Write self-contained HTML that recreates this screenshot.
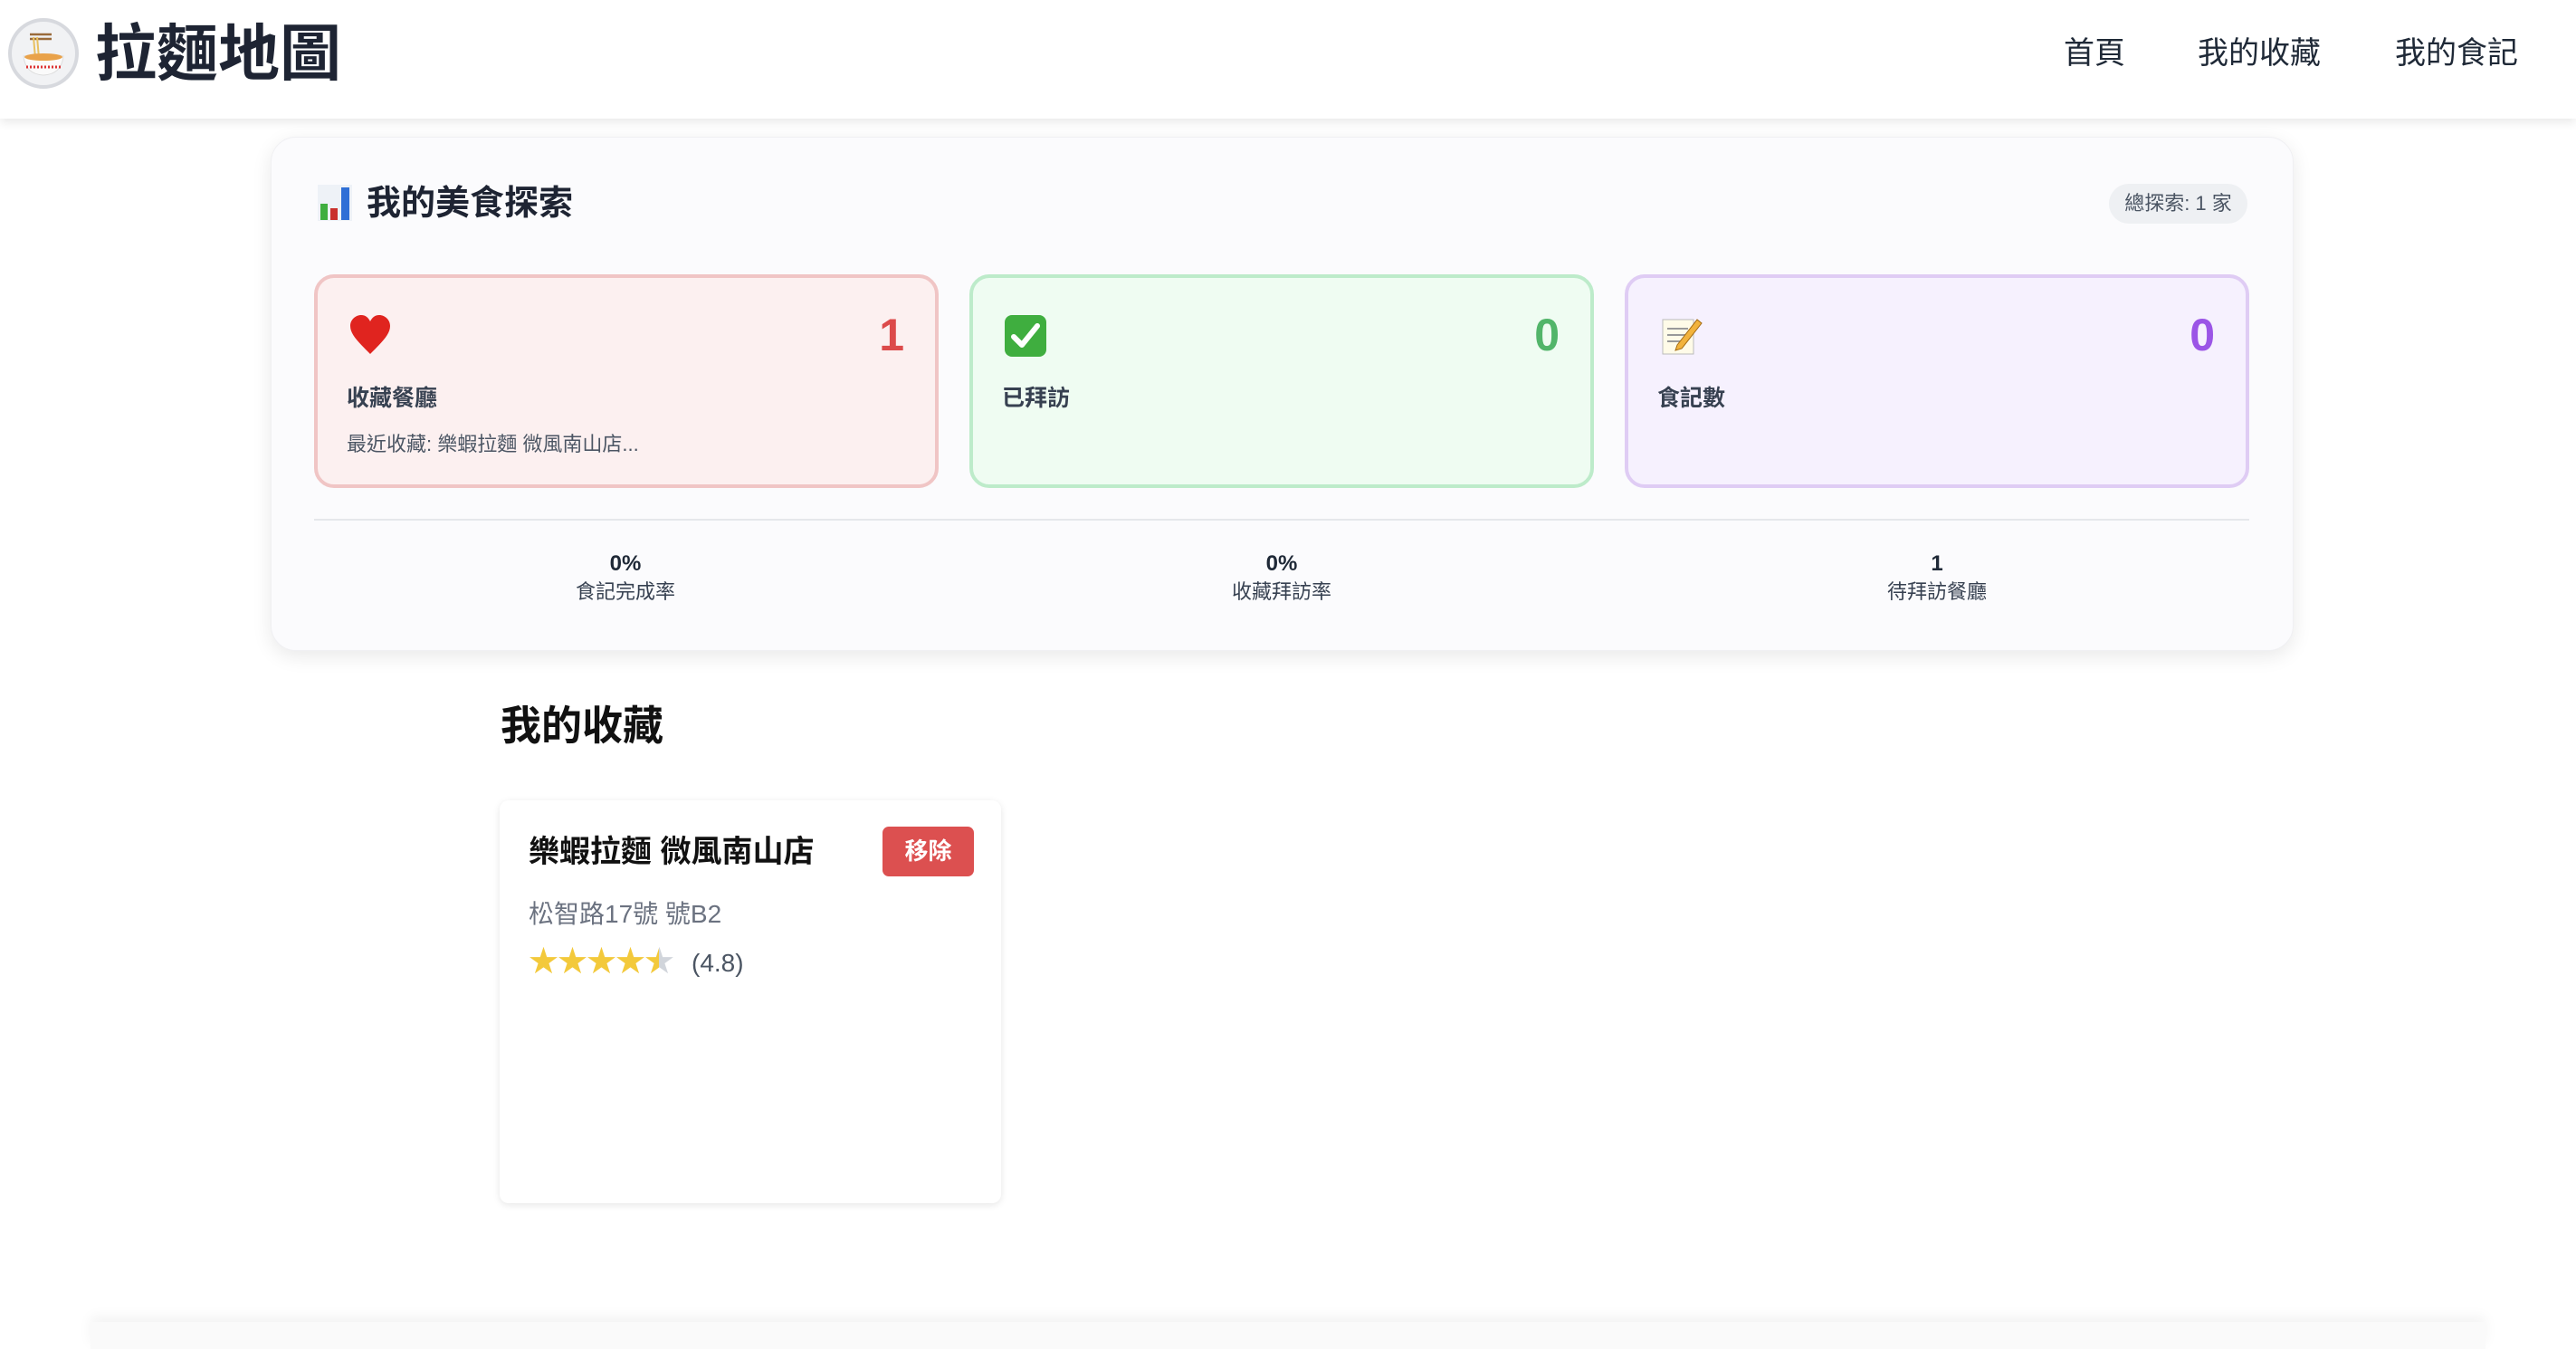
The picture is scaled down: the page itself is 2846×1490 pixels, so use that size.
<!DOCTYPE html>
<html><head><meta charset="utf-8"><style>
*{margin:0;padding:0;box-sizing:border-box}
body{width:2846px;height:1478px;background:#fff;font-family:"Liberation Sans","Noto Sans CJK TC",sans-serif;position:relative;overflow:hidden;color:#1f2937}
.hdr{position:absolute;left:0;top:0;width:2846px;height:131px;background:#fff;box-shadow:0 4px 10px rgba(0,0,0,.09)}
.logo{position:absolute;left:9px;top:20px;width:78px;height:78px;border-radius:50%;background:#f1f2f4;border:4px solid #d7d9de}
.title{position:absolute;left:105px;top:18px;font-size:68px;font-weight:700;color:#1e2433;line-height:84px}
.nav{position:absolute;top:37px;font-size:34px;color:#1f2937;line-height:44px}
.panel{position:absolute;left:299px;top:151px;width:2235px;height:568px;background:#fbfbfd;border-radius:28px;box-shadow:0 6px 22px rgba(0,0,0,.09);border:1px solid #f0f0f3}
.pt{position:absolute;left:405px;top:202px;font-size:38px;font-weight:700;color:#1e2433;line-height:46px}
.badge{position:absolute;left:2330px;top:203px;width:153px;height:44px;border-radius:22px;background:#eef0f3;font-size:22px;color:#4b5563;text-align:center;line-height:44px}
.card{position:absolute;top:303px;width:690px;height:236px;border-radius:22px;border:4px solid}
.num{position:absolute;right:34px;top:34px;font-size:50px;font-weight:700;font-family:"Liberation Sans",sans-serif}
.lab{position:absolute;left:32px;top:113px;font-size:25px;font-weight:700;color:#374151}
.sub{position:absolute;left:32px;top:166px;font-size:22px;color:#4b5563}
.ic{position:absolute;left:34px;top:40px}
.st{position:absolute;top:608px;width:400px;text-align:center;color:#1f2937}
.st b{display:block;font-size:24px;line-height:30px}
.st span{display:block;font-size:22px;line-height:32px;color:#374151}
.h2{position:absolute;left:553px;top:774px;font-size:45px;font-weight:700;color:#111;line-height:56px}
.fc{position:absolute;left:552px;top:884px;width:554px;height:445px;background:#fff;border-radius:10px;box-shadow:0 2px 8px rgba(0,0,0,.1)}
</style></head><body>
<div class="hdr">
<div class="logo"><svg width="70" height="70" viewBox="0 0 70 70"><path d="M20 14 L44 14 M20 19 L44 19" stroke="#9a6a3a" stroke-width="2.5"/><path d="M24 17 L26 40 M28 17 L30 40" stroke="#e8c060" stroke-width="2"/><path d="M13 38 Q35 34 57 38 Q55 58 35 59 Q15 58 13 38Z" fill="#fafafa" stroke="#ddd"/><ellipse cx="35" cy="39" rx="21" ry="4" fill="#e9a24a"/><path d="M16 50 H54" stroke="#d33" stroke-width="3" stroke-dasharray="2 2"/></svg></div>
<div class="title">拉麵地圖</div>
<div class="nav" style="left:2280px">首頁</div>
<div class="nav" style="left:2428px">我的收藏</div>
<div class="nav" style="left:2646px">我的食記</div>
</div>

<div class="panel"></div>
<svg style="position:absolute;left:350px;top:203px" width="40" height="42" viewBox="0 0 40 42"><rect x="1" y="1" width="38" height="40" fill="#eef2f7"/><rect x="4" y="22" width="8" height="18" fill="#3fae3f"/><rect x="15" y="27" width="8" height="13" fill="#c9302c"/><rect x="27" y="4" width="9" height="36" fill="#2f6fd6"/></svg>
<div class="pt">我的美食探索</div>
<div class="badge">總探索: 1 家</div>

<div class="card" style="left:347px;background:#fcf0f0;border-color:#f0c5c5">
<svg class="ic" width="48" height="46" viewBox="0 0 48 46"><path d="M24 44 C10 30 2 22 2 13 C2 6 8 1 14 1 C19 1 22 4 24 8 C26 4 29 1 34 1 C40 1 46 6 46 13 C46 22 38 30 24 44Z" fill="#e0241f"/></svg>
<div class="num" style="color:#dc4a4a">1</div>
<div class="lab">收藏餐廳</div>
<div class="sub">最近收藏: 樂蝦拉麵 微風南山店...</div>
</div>
<div class="card" style="left:1071px;background:#effcf2;border-color:#bdebca">
<svg class="ic" width="48" height="48" viewBox="0 0 48 48"><rect x="1" y="1" width="46" height="46" rx="8" fill="#3fae3f"/><path d="M11 25 L20 34 L37 13" stroke="#fff" stroke-width="6" fill="none" stroke-linecap="round" stroke-linejoin="round"/></svg>
<div class="num" style="color:#52b56a">0</div>
<div class="lab">已拜訪</div>
</div>
<div class="card" style="left:1795px;background:#f6f1fe;border-color:#dfccf4">
<svg class="ic" width="48" height="46" viewBox="0 0 48 46"><rect x="4" y="6" width="34" height="38" fill="#fffbe8" stroke="#bbb"/><path d="M9 16H32M9 23H32M9 30H26" stroke="#999" stroke-width="2"/><path d="M20 34 L42 6 L47 10 L25 38 L18 40Z" fill="#f2b33d" stroke="#a36a12"/></svg>
<div class="num" style="color:#9b55e6">0</div>
<div class="lab">食記數</div>
</div>

<div style="position:absolute;left:347px;top:573px;width:2138px;height:2px;background:#e5e7eb"></div>
<div class="st" style="left:491px"><b>0%</b><span>食記完成率</span></div>
<div class="st" style="left:1216px"><b>0%</b><span>收藏拜訪率</span></div>
<div class="st" style="left:1940px"><b>1</b><span>待拜訪餐廳</span></div>

<div class="h2">我的收藏</div>
<div class="fc">
<div style="position:absolute;left:32px;top:36px;font-size:34px;font-weight:700;color:#111;line-height:42px">樂蝦拉麵 微風南山店</div>
<div style="position:absolute;left:423px;top:29px;width:101px;height:55px;background:#dc5050;border-radius:7px;color:#fff;font-size:26px;font-weight:700;text-align:center;line-height:55px">移除</div>
<div style="position:absolute;left:32px;top:108px;font-size:28px;color:#6b7280;line-height:36px">松智路17號 號B2</div>
<div style="position:absolute;left:32px;top:159px;font-size:33px;line-height:38px;color:#f3c93b;letter-spacing:-1px">★★★★<span style="background:linear-gradient(90deg,#f3c93b 50%,#d1d5db 50%);-webkit-background-clip:text;color:transparent">★</span><span style="color:#4b5563;font-size:28px;letter-spacing:0;margin-left:20px">(4.8)</span></div>
</div>
<div style="position:absolute;left:100px;top:1460px;width:2646px;height:30px;background:#fafafa;box-shadow:0 -6px 14px rgba(0,0,0,.05)"></div>
</body></html>
